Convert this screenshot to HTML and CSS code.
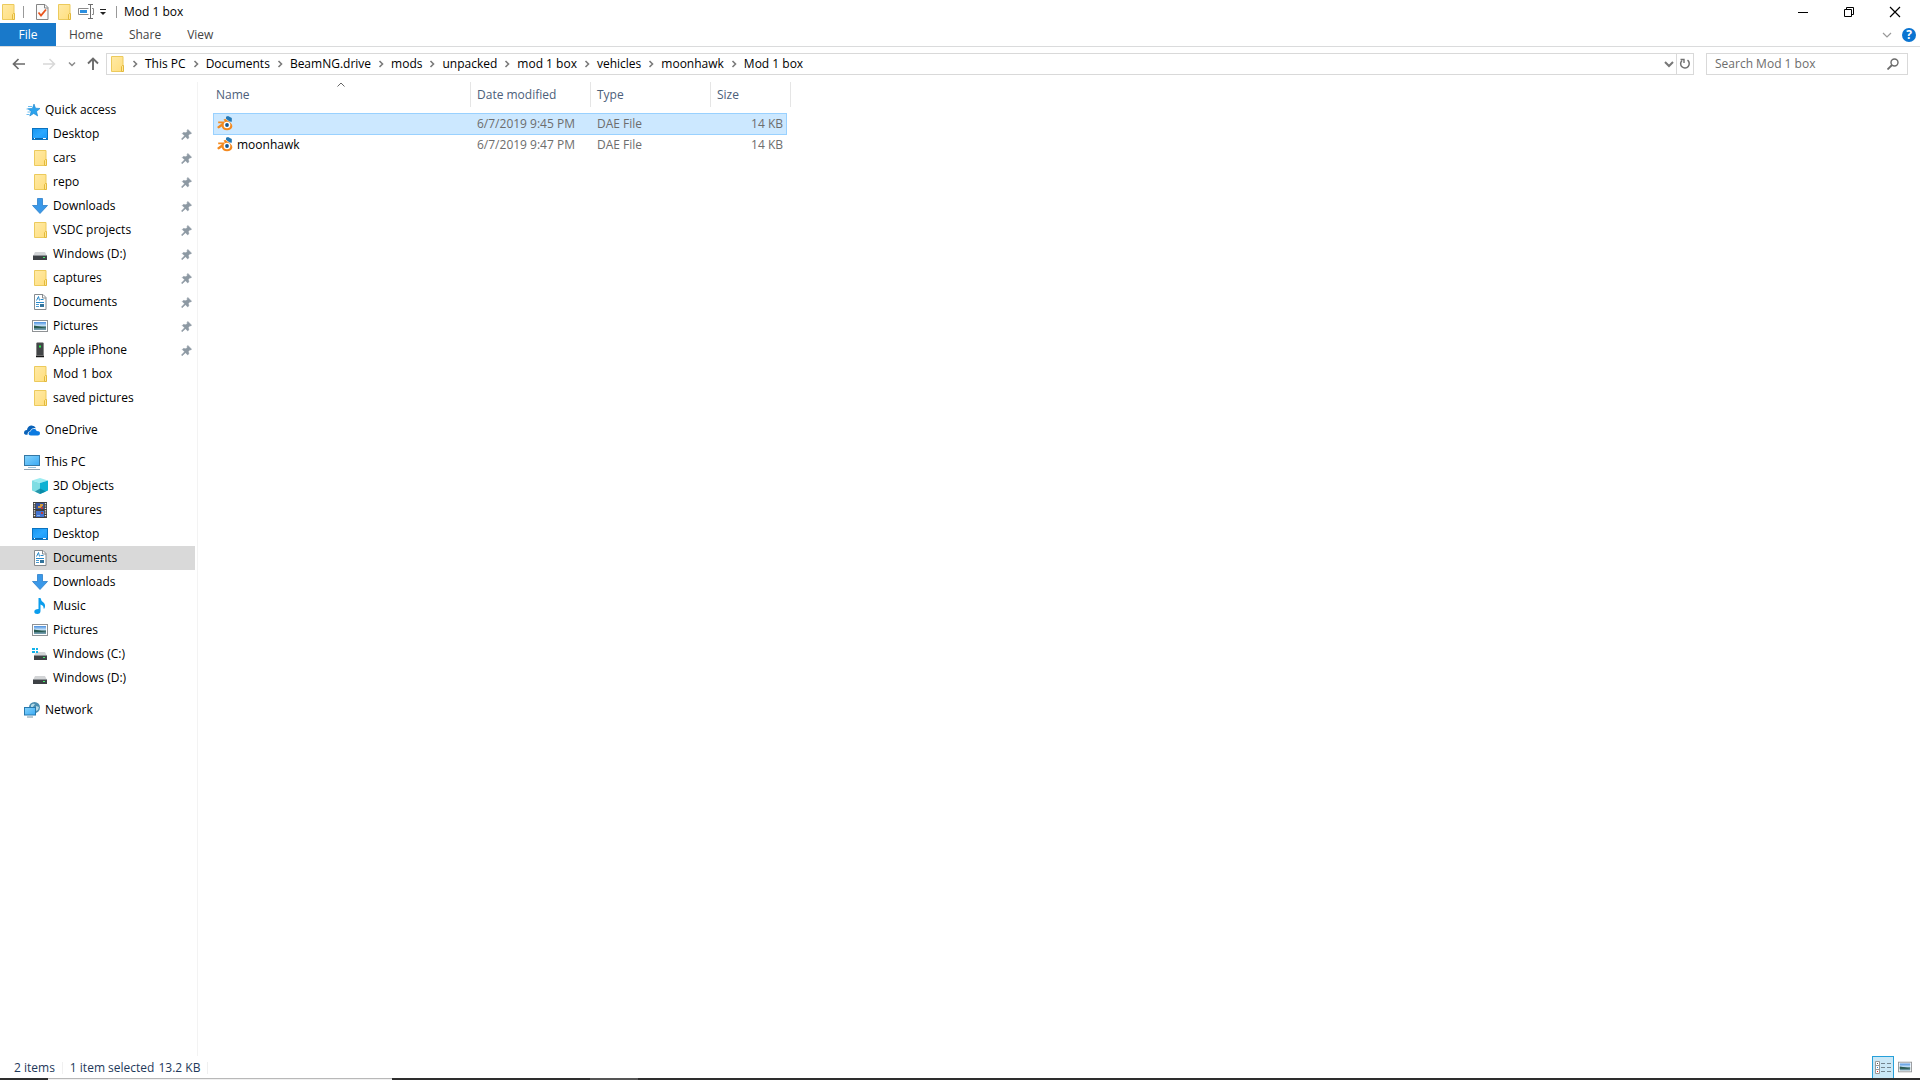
FILE: index.html
```html
<!DOCTYPE html>
<html lang="en">
<head>
    <meta charset="UTF-8">
    <meta name="viewport" content="width=device-width, initial-scale=1.0">
    <title>Mod 1 box</title>
    <link rel="stylesheet" href="styles.css">
</head>
<body>
    <!-- icon set -->
    <svg class="sprite" aria-hidden="true">
        <defs>
            <linearGradient id="g-folder" x1="0" y1="0" x2="1" y2="1"><stop offset="0" stop-color="#ffeaa6"/><stop offset="1" stop-color="#ffde7e"/></linearGradient>
            <linearGradient id="g-blue" x1="0" y1="0" x2="1" y2="1"><stop offset="0" stop-color="#1595f0"/><stop offset="0.5" stop-color="#2ba8ff"/><stop offset="1" stop-color="#1397fb"/></linearGradient>
            <linearGradient id="g-screen" x1="0" y1="0" x2="1" y2="1"><stop offset="0" stop-color="#86d3fb"/><stop offset="1" stop-color="#3aaaf5"/></linearGradient>
            <linearGradient id="g-photo" x1="0" y1="0" x2="0" y2="1"><stop offset="0" stop-color="#4a8fdf"/><stop offset="0.5" stop-color="#cfe8fa"/><stop offset="0.6" stop-color="#3a6a68"/><stop offset="1" stop-color="#7aa3b8"/></linearGradient>
        </defs>
        <symbol id="folder" viewBox="0 0 16 16">
            <path d="M2.500.5h11.500v9.500h0v5.500h-11.500z" fill="url(#g-folder)" stroke="#ecca5c"/>
            <path d="M12.500 15.500v-5l1-1h1v6z" fill="#ffe796" stroke="#e3b93c"/>
        </symbol>
        <symbol id="star" viewBox="0 0 16 16">
            <path d="M10 2l1.500 4.200 4.500.3-3.500 3 1.200 4.500-4-2.500-3.900 2.500 1.400-4.600-3.400-2.700 4.600-.3z" fill="#2ba3ee" stroke="#1681cb" stroke-width=".6"/>
            <path d="M4 4.500h4M2.500 7h3M3.500 10h3M2.500 12.500h3" stroke="#6cbdf0"/>
        </symbol>
        <symbol id="desktop" viewBox="0 0 16 16">
            <rect x=".5" y="2.500" width="15" height="11" fill="url(#g-blue)" stroke="#0a72bf"/>
            <path d="M1 12.500h14" stroke="#0a67ae"/><path d="M2 12.500h1M11 12.500h3" stroke="#fff"/>
        </symbol>
        <symbol id="download" viewBox="0 0 16 16">
            <path d="M5.500.5h5v7h5l-7.500 8-7.500-8h5z" fill="#3a98e8" stroke="#2b7fca" stroke-width=".8"/>
        </symbol>
        <symbol id="drive" viewBox="0 0 16 16">
            <path d="M3 6h10l2 4h-14z" fill="#d2d4d6"/><rect x="1" y="9" width="14" height="5" fill="#3d4145"/>
            <path d="M1 9.500h14" stroke="#8e9296"/><rect x="11" y="11" width="2" height="1" fill="#45f06b"/>
        </symbol>
        <symbol id="windrive" viewBox="0 0 16 16">
            <path d="M4 6h9l2 4h-13z" fill="#d2d4d6"/><rect x="2" y="9" width="13" height="5" fill="#3d4145"/>
            <path d="M2 9.500h13" stroke="#8e9296"/><rect x="11" y="11" width="2" height="1" fill="#45f06b"/>
            <path d="M0 2h3v2h-3zM4 2h2v2h-2zM0 5h3v2h-3zM4 5h2v2h-2z" fill="#12b2ea"/>
        </symbol>
        <symbol id="document" viewBox="0 0 16 16">
            <path d="M2.500.5h8.500l3 3v12h-11.500z" fill="#fff" stroke="#858a8e"/><path d="M10.500.5v3.500h3.500" fill="none" stroke="#858a8e"/>
            <path d="M4.500 6.500l2-4 1 4M8.500 5.500h3M4 8.500h8" fill="none" stroke="#2788c9"/>
            <path d="M4 10.500h3M4 12.500h3" stroke="#4a9bd0"/><rect x="8" y="10" width="4" height="3" fill="#32749c"/>
        </symbol>
        <symbol id="picture" viewBox="0 0 16 16">
            <rect x=".5" y="2.500" width="15" height="11" fill="#fff" stroke="#8f9295"/>
            <rect x="2" y="4" width="12" height="8" fill="url(#g-photo)"/><path d="M2 7.500q5 .5 12 2.500h-12z" fill="#285a50"/>
        </symbol>
        <symbol id="phone" viewBox="0 0 16 16">
            <path d="M4.500 1.500q0-.8.8-.8h5.400q.8 0 .8.800v12h-7z" fill="#424547" stroke="#777" stroke-width=".6"/>
            <rect x="7" y="3.500" width="2" height="2" fill="#28ef50"/><path d="M4 14.500h8" stroke="#171717" stroke-width="1.500"/>
        </symbol>
        <symbol id="onedrive" viewBox="0 0 16 16">
            <path d="M0 11q0-3 3-3 .5-4 4-4.500 3.500-.3 5 2.800-4-1-6 3-2.500 0-2.500 3.500-3.500.2-3.500-1.800z" fill="#0a62b8"/>
            <path d="M4.500 11.500q0-2 2.200-2.200.6-2.600 3-2.600 2.200 0 3 2.200 3.300 0 3.300 2.400 0 2.200-2.200 2.200h-7q-2.300 0-2.300-2z" fill="#0c7ae0"/>
        </symbol>
        <symbol id="pc" viewBox="0 0 16 16">
            <rect x=".5" y="1.500" width="15" height="10" fill="url(#g-screen)" stroke="#3578a5"/>
            <path d="M4 13.500h8" stroke="#9ac0d8"/><path d="M0 15.500h16" stroke="#93a5b3"/>
        </symbol>
        <symbol id="cube" viewBox="0 0 16 16">
            <path d="M0 2.500l8-2.500 8 2.500-8 2.500z" fill="#9cecf1"/><path d="M0 2.500l8 2.500v11l-8-3.500z" fill="#7fdde3"/>
            <path d="M16 2.500l-8 2.500v11l8-3.500z" fill="#0eb1d3"/><path d="M8 10.500l6 3-6 2.500-5-2.500z" fill="#087f99" opacity=".75"/>
        </symbol>
        <symbol id="film" viewBox="0 0 16 16">
            <rect x="1" y="0" width="14" height="16" fill="#3f3f3f"/><path d="M2.500 1v14M13.500 1v14" stroke="#eee" stroke-width="1.400" stroke-dasharray="1.200 1.200"/>
            <rect x="4" y="1" width="8" height="6" fill="#37549b"/><rect x="4" y="9" width="8" height="6" fill="#4373d0"/>
            <path d="M8 2h3v2h-3zM6 4h4v2h-4z" fill="#d39a3b"/><path d="M9 5h2v2h-2zM9 10h2v2h-2z" fill="#bd3b36"/><path d="M5 13h3v1h-3z" fill="#86b8ea"/>
        </symbol>
        <symbol id="music" viewBox="0 0 16 16">
            <path d="M6.500 0h2q.5 3 3 4.500 2.500 2 1 6h-1q.5-3-3-4v6.500q0 3-3.200 3-3 0-3-2.200 0-2.800 4.200-2.800z" fill="#0b9ded"/>
        </symbol>
        <symbol id="network" viewBox="0 0 16 16">
            <circle cx="10.500" cy="5.500" r="5.500" fill="#4a8db0"/><path d="M7 3q2-2 4-1l-2 3-2 1zM12 4l3 1-1 3-2 1z" fill="#b3d9e6"/>
            <rect x=".5" y="5.500" width="11" height="7.500" fill="url(#g-screen)" stroke="#2778ad"/><path d="M3 15h6" stroke="#7795a6"/>
        </symbol>
        <symbol id="pin" viewBox="0 0 12 12">
            <path d="M7.500 0.500l4 4-.8.900-1-.2-1.700 1.800.6 2.600-1.300 1.200-2.400-2.400-3.600 3.300-.8-.8 3.400-3.500-2.500-2.500 1.200-1.200 2.700.5 1.700-1.700-.3-1.100z" fill="#8d99a3" stroke="#8d99a3" stroke-width=".6"/>
        </symbol>
        <symbol id="blender" viewBox="0 0 16 16">
            <path d="M9 .8l2-.8 3.800 2v3.800l-2.300-.3-3.500-2.700z" fill="#2478b5"/>
            <path d="M.3 10.800l4.700-3.500h-3.800v-1.800h6.800l-1.500-1.700 1.700-1 5.300 4q2.200 1.800 1.800 4-.8 3.400-5.300 3.400-4.600 0-5.200-3.700l-3 2q-1.500 0-1.500-1.700z" fill="#f38a20"/>
            <circle cx="10" cy="9" r="3.300" fill="#fff"/><circle cx="10" cy="9" r="1.900" fill="#14558f"/>
        </symbol>
        <symbol id="chevron" viewBox="0 0 8 8">
            <path d="M2.500 1l3 3-3 3" fill="none" stroke="#7a7a7a" stroke-width="1.600"/>
        </symbol>
    </svg>

    <div class="window">
        <header class="titlebar">
            <svg class="icon"><use href="#folder"/></svg>
            <span class="bar"></span>
            <button class="quick" aria-label="Properties">
                <svg class="icon" viewBox="0 0 16 16"><path d="M2.500.5h8.500l3 3v12h-11.500z" fill="#fafafa" stroke="#858585"/><path d="M10.500.5v3.500h3.500" fill="none" stroke="#858585"/><path d="M4.500 8.500l2.500 3 5-6" fill="none" stroke="#e9541d" stroke-width="1.800"/></svg>
            </button>
            <button class="quick" aria-label="New folder"><svg class="icon"><use href="#folder"/></svg></button>
            <button class="quick" aria-label="Rename">
                <svg class="icon" viewBox="0 0 16 16"><path d="M10.500 4.500h-10v6h10M14 4.500h1.500v6h-1.500" fill="#fff" stroke="#8a8a8a"/><path d="M2 7.500h7" stroke="#2b8fe0" stroke-width="3"/><path d="M10 .5h5M10 14.500h5M12.500 1v13" stroke="#6d6d6d"/></svg>
            </button>
            <button class="quick narrow" aria-label="Customize Quick Access Toolbar">
                <svg width="8" height="8" viewBox="0 0 8 8"><path d="M1 1.500h6" stroke="#222"/><path d="M1 4h6l-3 3z" fill="#222"/></svg>
            </button>
            <span class="bar"></span>
            <span class="title">Mod 1 box</span>
            <div class="controls">
                <button aria-label="Minimize"><svg width="12" height="12" viewBox="0 0 12 12"><path d="M1 6.500h10" stroke="#000"/></svg></button>
                <button aria-label="Restore"><svg width="12" height="12" viewBox="0 0 12 12"><path d="M1.500 3.500h7v7h-7zM3.500 3v-1.500h7v7h-2" fill="none" stroke="#000"/></svg></button>
                <button aria-label="Close"><svg width="12" height="12" viewBox="0 0 12 12"><path d="M1 1l10 10M11 1l-10 10" stroke="#000" stroke-width="1.200"/></svg></button>
            </div>
        </header>

        <nav class="tabs">
            <button class="tab file">File</button>
            <button class="tab">Home</button>
            <button class="tab">Share</button>
            <button class="tab">View</button>
            <div class="tabs-end">
                <button aria-label="Expand the Ribbon"><svg width="10" height="8" viewBox="0 0 10 8"><path d="M1 2l4 4 4-4" fill="none" stroke="#999" stroke-width="1.200"/></svg></button>
                <button class="help" aria-label="Help">?</button>
            </div>
        </nav>

        <div class="address-row">
            <div class="history">
                <button aria-label="Back"><svg width="14" height="14" viewBox="0 0 14 14"><path d="M13 7h-11M6.500 2l-5 5 5 5" fill="none" stroke="#6b6b6b" stroke-width="1.700"/></svg></button>
                <button aria-label="Forward"><svg width="14" height="14" viewBox="0 0 14 14"><path d="M1 7h11M7.500 2l5 5-5 5" fill="none" stroke="#d8d8d8" stroke-width="1.500"/></svg></button>
                <button class="recent" aria-label="Recent locations"><svg width="8" height="8" viewBox="0 0 8 8"><path d="M1 2.500l3 3 3-3" fill="none" stroke="#8a8a8a" stroke-width="1.500"/></svg></button>
                <button class="up" aria-label="Up"><svg width="14" height="14" viewBox="0 0 14 14"><path d="M7 13v-11M2 6.500l5-5 5 5" fill="none" stroke="#6b6b6b" stroke-width="1.900"/></svg></button>
            </div>
            <div class="address">
                <svg class="icon"><use href="#folder"/></svg>
                <div class="crumbs">
                    <svg><use href="#chevron"/></svg><a href="#">This PC</a>
                    <svg><use href="#chevron"/></svg><a href="#">Documents</a>
                    <svg><use href="#chevron"/></svg><a href="#">BeamNG.drive</a>
                    <svg><use href="#chevron"/></svg><a href="#">mods</a>
                    <svg><use href="#chevron"/></svg><a href="#">unpacked</a>
                    <svg><use href="#chevron"/></svg><a href="#">mod 1 box</a>
                    <svg><use href="#chevron"/></svg><a href="#">vehicles</a>
                    <svg><use href="#chevron"/></svg><a href="#">moonhawk</a>
                    <svg><use href="#chevron"/></svg><a href="#">Mod 1 box</a>
                </div>
                <button class="previous" aria-label="Previous locations"><svg width="10" height="8" viewBox="0 0 10 8"><path d="M1 2l4 4 4-4" fill="none" stroke="#777" stroke-width="2"/></svg></button>
                <button class="refresh" aria-label="Refresh"><svg width="12" height="12" viewBox="0 0 12 12"><path d="M3 2.500a4.300 4.300 0 1 0 5.500-.3" fill="none" stroke="#707070" stroke-width="1.500"/><path d="M1.500 1.500h3.500v3.500" fill="none" stroke="#707070" stroke-width="1.400"/></svg></button>
            </div>
            <div class="search">
                <input type="search" placeholder="Search Mod 1 box" aria-label="Search Mod 1 box">
                <svg width="12" height="12" viewBox="0 0 12 12"><circle cx="7.500" cy="4.500" r="3.500" fill="none" stroke="#6b6b6b" stroke-width="1.400"/><path d="M5 7l-4.500 4.500" stroke="#6b6b6b" stroke-width="1.800"/></svg>
            </div>
        </div>

        <div class="content">
            <aside class="sidebar">
                <ul class="group">
                    <li><a class="root" href="#"><svg class="icon"><use href="#star"/></svg>Quick access</a></li>
                    <li><a href="#"><svg class="icon"><use href="#desktop"/></svg>Desktop<svg class="pin"><use href="#pin"/></svg></a></li>
                    <li><a href="#"><svg class="icon"><use href="#folder"/></svg>cars<svg class="pin"><use href="#pin"/></svg></a></li>
                    <li><a href="#"><svg class="icon"><use href="#folder"/></svg>repo<svg class="pin"><use href="#pin"/></svg></a></li>
                    <li><a href="#"><svg class="icon"><use href="#download"/></svg>Downloads<svg class="pin"><use href="#pin"/></svg></a></li>
                    <li><a href="#"><svg class="icon"><use href="#folder"/></svg>VSDC projects<svg class="pin"><use href="#pin"/></svg></a></li>
                    <li><a href="#"><svg class="icon"><use href="#drive"/></svg>Windows (D:)<svg class="pin"><use href="#pin"/></svg></a></li>
                    <li><a href="#"><svg class="icon"><use href="#folder"/></svg>captures<svg class="pin"><use href="#pin"/></svg></a></li>
                    <li><a href="#"><svg class="icon"><use href="#document"/></svg>Documents<svg class="pin"><use href="#pin"/></svg></a></li>
                    <li><a href="#"><svg class="icon"><use href="#picture"/></svg>Pictures<svg class="pin"><use href="#pin"/></svg></a></li>
                    <li><a href="#"><svg class="icon"><use href="#phone"/></svg>Apple iPhone<svg class="pin"><use href="#pin"/></svg></a></li>
                    <li><a href="#"><svg class="icon"><use href="#folder"/></svg>Mod 1 box</a></li>
                    <li><a href="#"><svg class="icon"><use href="#folder"/></svg>saved pictures</a></li>
                </ul>
                <ul class="group">
                    <li><a class="root" href="#"><svg class="icon"><use href="#onedrive"/></svg>OneDrive</a></li>
                </ul>
                <ul class="group">
                    <li><a class="root" href="#"><svg class="icon"><use href="#pc"/></svg>This PC</a></li>
                    <li><a href="#"><svg class="icon"><use href="#cube"/></svg>3D Objects</a></li>
                    <li><a href="#"><svg class="icon"><use href="#film"/></svg>captures</a></li>
                    <li><a href="#"><svg class="icon"><use href="#desktop"/></svg>Desktop</a></li>
                    <li><a class="current" href="#"><svg class="icon"><use href="#document"/></svg>Documents</a></li>
                    <li><a href="#"><svg class="icon"><use href="#download"/></svg>Downloads</a></li>
                    <li><a href="#"><svg class="icon"><use href="#music"/></svg>Music</a></li>
                    <li><a href="#"><svg class="icon"><use href="#picture"/></svg>Pictures</a></li>
                    <li><a href="#"><svg class="icon"><use href="#windrive"/></svg>Windows (C:)</a></li>
                    <li><a href="#"><svg class="icon"><use href="#drive"/></svg>Windows (D:)</a></li>
                </ul>
                <ul class="group">
                    <li><a class="root" href="#"><svg class="icon"><use href="#network"/></svg>Network</a></li>
                </ul>
            </aside>

            <main class="files">
                <table>
                    <thead>
                        <tr>
                            <th>Name<svg class="sort" width="8" height="5" viewBox="0 0 8 5"><path d="M.5 4.500l3.500-3.500 3.500 3.500" fill="none" stroke="#666"/></svg></th>
                            <th>Date modified</th>
                            <th>Type</th>
                            <th>Size</th>
                        </tr>
                    </thead>
                    <tbody>
                        <tr class="selected">
                            <td><svg class="icon"><use href="#blender"/></svg></td>
                            <td>6/7/2019 9:45 PM</td>
                            <td>DAE File</td>
                            <td>14 KB</td>
                        </tr>
                        <tr>
                            <td><svg class="icon"><use href="#blender"/></svg>moonhawk</td>
                            <td>6/7/2019 9:47 PM</td>
                            <td>DAE File</td>
                            <td>14 KB</td>
                        </tr>
                    </tbody>
                </table>
            </main>
        </div>

        <footer class="statusbar">
            <span class="count">2 items</span>
            <span class="selection"><span>1 item selected</span><span>13.2 KB</span></span>
            <div class="views">
                <button class="active" aria-label="Details view"><svg width="16" height="14" viewBox="0 0 16 14"><path d="M.5.5h4v12h-4zM.5 4.500h4M.5 8.500h4" fill="#fff" stroke="#999"/><path d="M6 2.500h4M12 2.500h4M6 6.500h4M12 6.500h4M6 10.500h4M12 10.500h4" stroke="#74858f"/><path d="M2 2.500h1" stroke="#555"/><path d="M2 6.500h1" stroke="#2788d9"/><path d="M2 10.500h1" stroke="#d22"/></svg></button>
                <button aria-label="Large icons view"><svg width="14" height="14" viewBox="0 0 16 16"><use href="#picture" width="16" height="16"/></svg></button>
            </div>
        </footer>
        <div class="taskbar"><span class="light"></span><span class="app"></span></div>
    </div>
</body>
</html>
```

FILE: styles.css
```css
* {
    box-sizing: border-box;
}
body {
    margin: 0;
    font-family: "Open Sans", "Noto Sans", sans-serif;
    font-size: 12px;
    line-height: 16px;
    color: #000;
    background-color: #fff;
}
button {
    display: flex;
    align-items: center;
    justify-content: center;
    padding: 0;
    border: none;
    background: none;
    font: inherit;
    color: inherit;
}
a {
    color: inherit;
    text-decoration: none;
}
svg {
    display: block;
    flex: none;
}
.sprite {
    position: absolute;
    width: 0;
    height: 0;
}
.icon {
    width: 16px;
    height: 16px;
}
.window {
    display: flex;
    flex-direction: column;
    min-height: 100vh;
}

/* title bar */
.titlebar {
    display: flex;
    align-items: center;
    height: 23px;
}
.bar {
    width: 1px;
    height: 12px;
    margin: 0 7px;
    background-color: #999;
}
.quick {
    width: 22px;
    height: 22px;
}
.quick.narrow {
    width: 12px;
}
.title {
    flex: 1;
}
.controls {
    display: flex;
    padding-right: 2px;
}
.controls button {
    width: 46px;
    height: 20px;
}

/* ribbon tabs */
.tabs {
    display: flex;
    height: 24px;
    border-bottom: 1px solid #dadbdc;
}
.tab {
    padding: 0 13px;
    color: #444;
}
.tab.file {
    width: 56px;
    color: #fff;
    background-color: #1979ca;
}
.tabs-end {
    display: flex;
    align-items: center;
    gap: 10px;
    margin-left: auto;
    padding-right: 4px;
}
.help {
    width: 14px;
    height: 14px;
    border-radius: 50%;
    font-weight: bold;
    color: #fff;
    background-color: #0a74d1;
}

/* address bar */
.address-row {
    display: flex;
    height: 35px;
    padding: 6px 12px 0 0;
}
.history {
    display: flex;
    width: 106px;
    padding-left: 4px;
}
.history button {
    width: 30px;
    height: 22px;
}
.history .recent {
    width: 16px;
}
.history .up {
    width: 26px;
}
.address {
    display: flex;
    flex: 1;
    align-items: center;
    height: 22px;
    padding-left: 2px;
    border: 1px solid #d9d9d9;
}
.crumbs {
    display: flex;
    flex: 1;
    align-items: center;
    gap: 6px;
    padding-left: 6px;
}
.crumbs svg {
    width: 8px;
    height: 8px;
}
.previous {
    width: 14px;
}
.refresh {
    width: 17px;
    height: 20px;
    border-left: 1px solid #d9d9d9;
}
.search {
    display: flex;
    align-items: center;
    width: 202px;
    height: 22px;
    margin-left: 12px;
    padding: 0 8px;
    border: 1px solid #d9d9d9;
}
.search input {
    flex: 1;
    min-width: 0;
    padding: 0;
    border: none;
    outline: none;
    font: inherit;
    background: none;
}
.search input::placeholder {
    color: #6d6d6d;
}

/* navigation pane */
.content {
    display: flex;
    flex: 1;
}
.sidebar {
    width: 198px;
    padding: 16px 2px 0 0;
    border-right: 1px solid #f3f3f3;
}
.group {
    margin: 0 0 8px;
    padding: 0;
    list-style: none;
}
.group a {
    display: flex;
    align-items: center;
    gap: 5px;
    height: 24px;
    padding: 0 3px 0 32px;
}
.group .root {
    padding-left: 24px;
}
.group .current {
    background-color: #d9d9d9;
}
.pin {
    width: 11px;
    height: 11px;
    margin-left: auto;
}

/* file list */
.files {
    flex: 1;
    padding-left: 15px;
}
table, thead, tbody {
    display: block;
}
tr {
    display: grid;
    grid-template-columns: 258px 120px 120px 80px;
}
th {
    position: relative;
    height: 25px;
    padding: 5px 6px 4px 3px;
    border-right: 1px solid #e5e5e5;
    font-weight: normal;
    text-align: left;
    color: #4c607a;
}
th + th {
    padding-left: 6px;
}
.sort {
    position: absolute;
    top: 0;
    left: 50%;
    margin-left: -5px;
}
tbody {
    padding-top: 6px;
}
tbody tr {
    grid-template-columns: 257px 120px 120px 75px;
    width: 574px;
    height: 22px;
    border: 1px solid transparent;
}
tbody tr + tr {
    margin-top: -1px;
}
.selected {
    border-color: #99d1ff;
    background-color: #cce8ff;
}
td {
    padding: 2px 3px 2px 6px;
    color: #6d6d6d;
}
td:first-child {
    display: flex;
    align-items: center;
    gap: 4px;
    padding-left: 3px;
    color: #000;
}
td:last-child {
    text-align: right;
}

/* status bar */
.statusbar {
    display: flex;
    align-items: center;
    height: 22px;
    padding: 0 4px 0 14px;
    color: #1e395b;
}
.count, .selection {
    margin-top: 2px;
    padding-right: 7px;
    border-right: 1px solid #f0f0f0;
    line-height: 12px;
}
.selection {
    display: flex;
    gap: 4px;
    padding-left: 7px;
}
.views {
    display: flex;
    margin-left: auto;
}
.views button {
    width: 22px;
    height: 22px;
}
.views .active {
    border: 1px solid #26a0da;
    border-bottom: none;
    background-color: #cbe8f6;
}
.taskbar {
    display: flex;
    height: 2px;
    padding-left: 48px;
    background-color: #2e2e2e;
}
.light {
    width: 344px;
    border-top: 1px solid #b8b8b8;
    background-color: #f0f0f0;
}
.app {
    width: 48px;
    margin-left: 198px;
    background-color: #555;
}
```
